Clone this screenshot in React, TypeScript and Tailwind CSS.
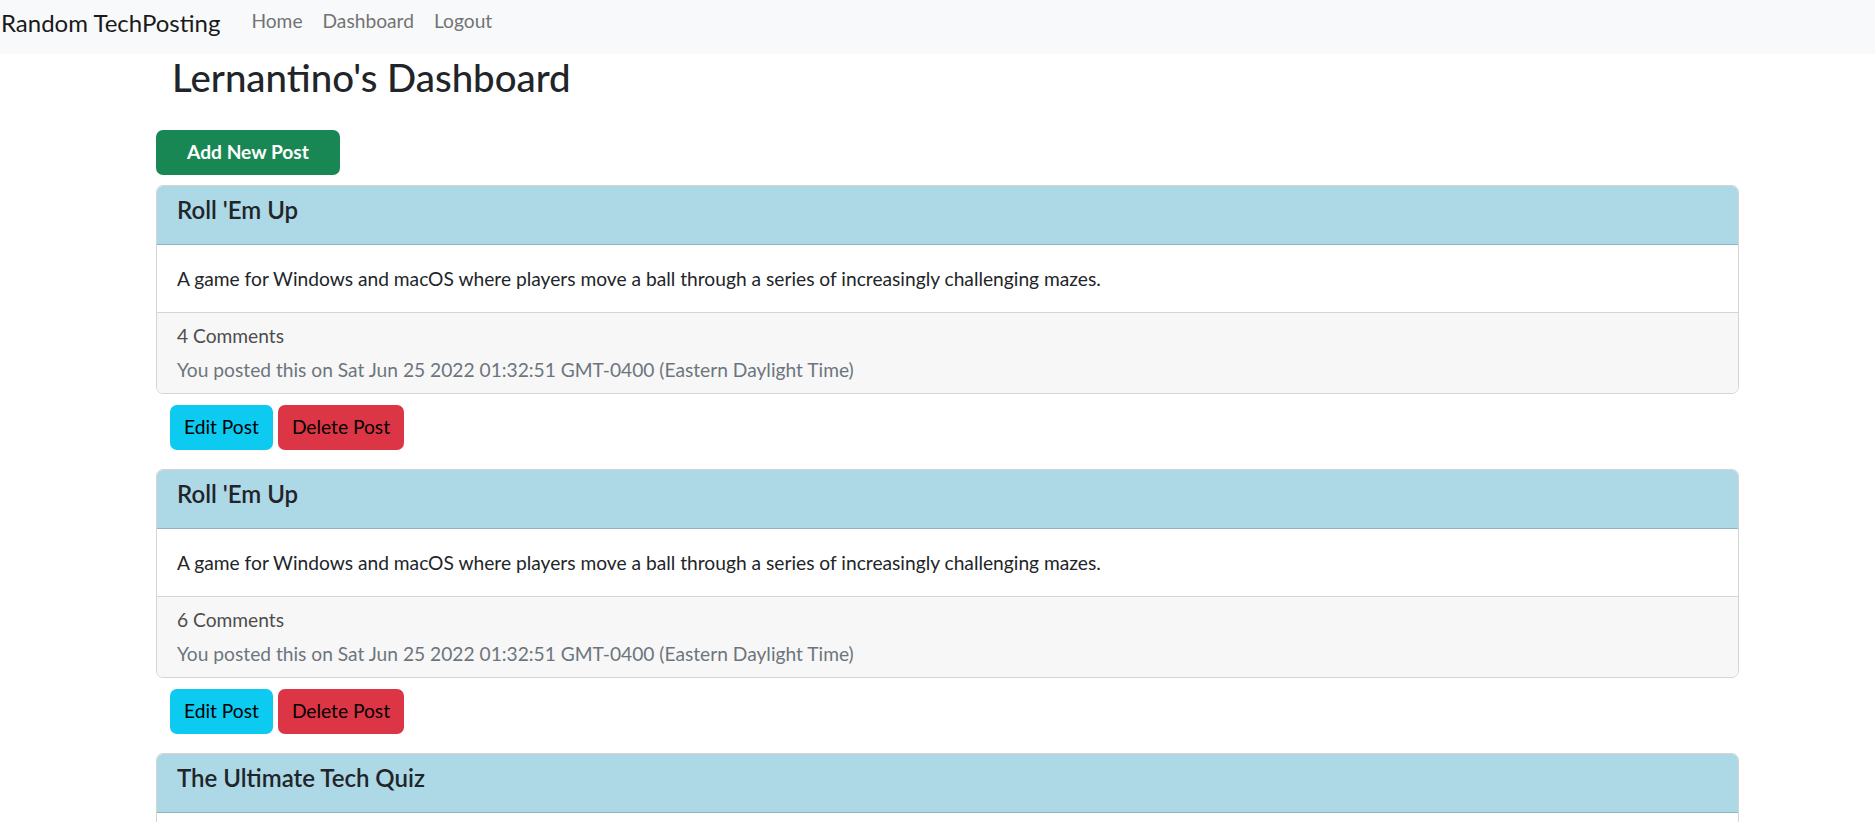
const posts = [
  {
    title: "Roll 'Em Up",
    body: "A game for Windows and macOS where players move a ball through a series of increasingly challenging mazes.",
    comments: 4,
    date: "Sat Jun 25 2022 01:32:51 GMT-0400 (Eastern Daylight Time)",
  },
  {
    title: "Roll 'Em Up",
    body: "A game for Windows and macOS where players move a ball through a series of increasingly challenging mazes.",
    comments: 6,
    date: "Sat Jun 25 2022 01:32:51 GMT-0400 (Eastern Daylight Time)",
  },
  {
    title: "The Ultimate Tech Quiz",
    body: "A quiz game that tests your knowledge of the latest technology trends.",
    comments: 3,
    date: "Sat Jun 25 2022 01:32:51 GMT-0400 (Eastern Daylight Time)",
  },
];

function PostCard({ post }: { post: (typeof posts)[number] }) {
  return (
    <div className="mt-[10px]">
      <div className="overflow-hidden rounded-[7px] border border-[#d5d5d5]">
        <div className="h-[59px] border-b border-[#8fb3bf] bg-[#add8e6] px-[20px] pt-[9px]">
          <h5 className="text-[24px] font-semibold leading-[29px] text-[#212529]">{post.title}</h5>
        </div>
        <div className="px-[20px] py-[19px] text-[19.2px] leading-[29px] text-[#212529]">{post.body}</div>
        <div className="h-[81px] border-t border-[#d5d5d5] bg-[#f7f7f7] px-[20px] pt-[8px] text-[19.2px] leading-[29px]">
          <p className="text-[#4d4d4d]">{post.comments} Comments</p>
          <p className="mt-[5px] text-[#6c757d]">You posted this on {post.date}</p>
        </div>
      </div>
      <div className="mt-[11px] flex gap-[5px] pl-[14px]">
        <button className="h-[45px] rounded-[7px] bg-[#0dcaf0] px-[14px] text-[19.2px] text-black">Edit Post</button>
        <button className="h-[45px] rounded-[7px] bg-[#dc3545] px-[14px] text-[19.2px] text-black">Delete Post</button>
      </div>
      <div className="h-[9px]" />
    </div>
  );
}

export default function App() {
  return (
    <div className="min-h-screen bg-white font-['Segoe_UI',Lato,'Noto_Sans',sans-serif] text-[#212529]">
      <nav className="flex h-[54px] items-center bg-[#f8f9fa]">
        <a className="pl-[1px] pb-[8px] text-[24px] text-[#1a1a1a]">Random TechPosting</a>
        <div className="ml-[31px] flex gap-[20px] pb-[12px] text-[19.2px] text-[#737373]">
          <a>Home</a>
          <a>Dashboard</a>
          <a>Logout</a>
        </div>
      </nav>
      <main className="box-content w-[1583px] pl-[156px]">
        <h2 className="ml-[16px] text-[38.4px] font-medium leading-[46px]">Lernantino's Dashboard</h2>
        <button className="mt-[30px] h-[45px] w-[184px] rounded-[7px] bg-[#198754] text-[19.2px] font-bold text-white">
          Add New Post
        </button>
        {posts.map((p, i) => (
          <PostCard key={i} post={p} />
        ))}
      </main>
    </div>
  );
}
